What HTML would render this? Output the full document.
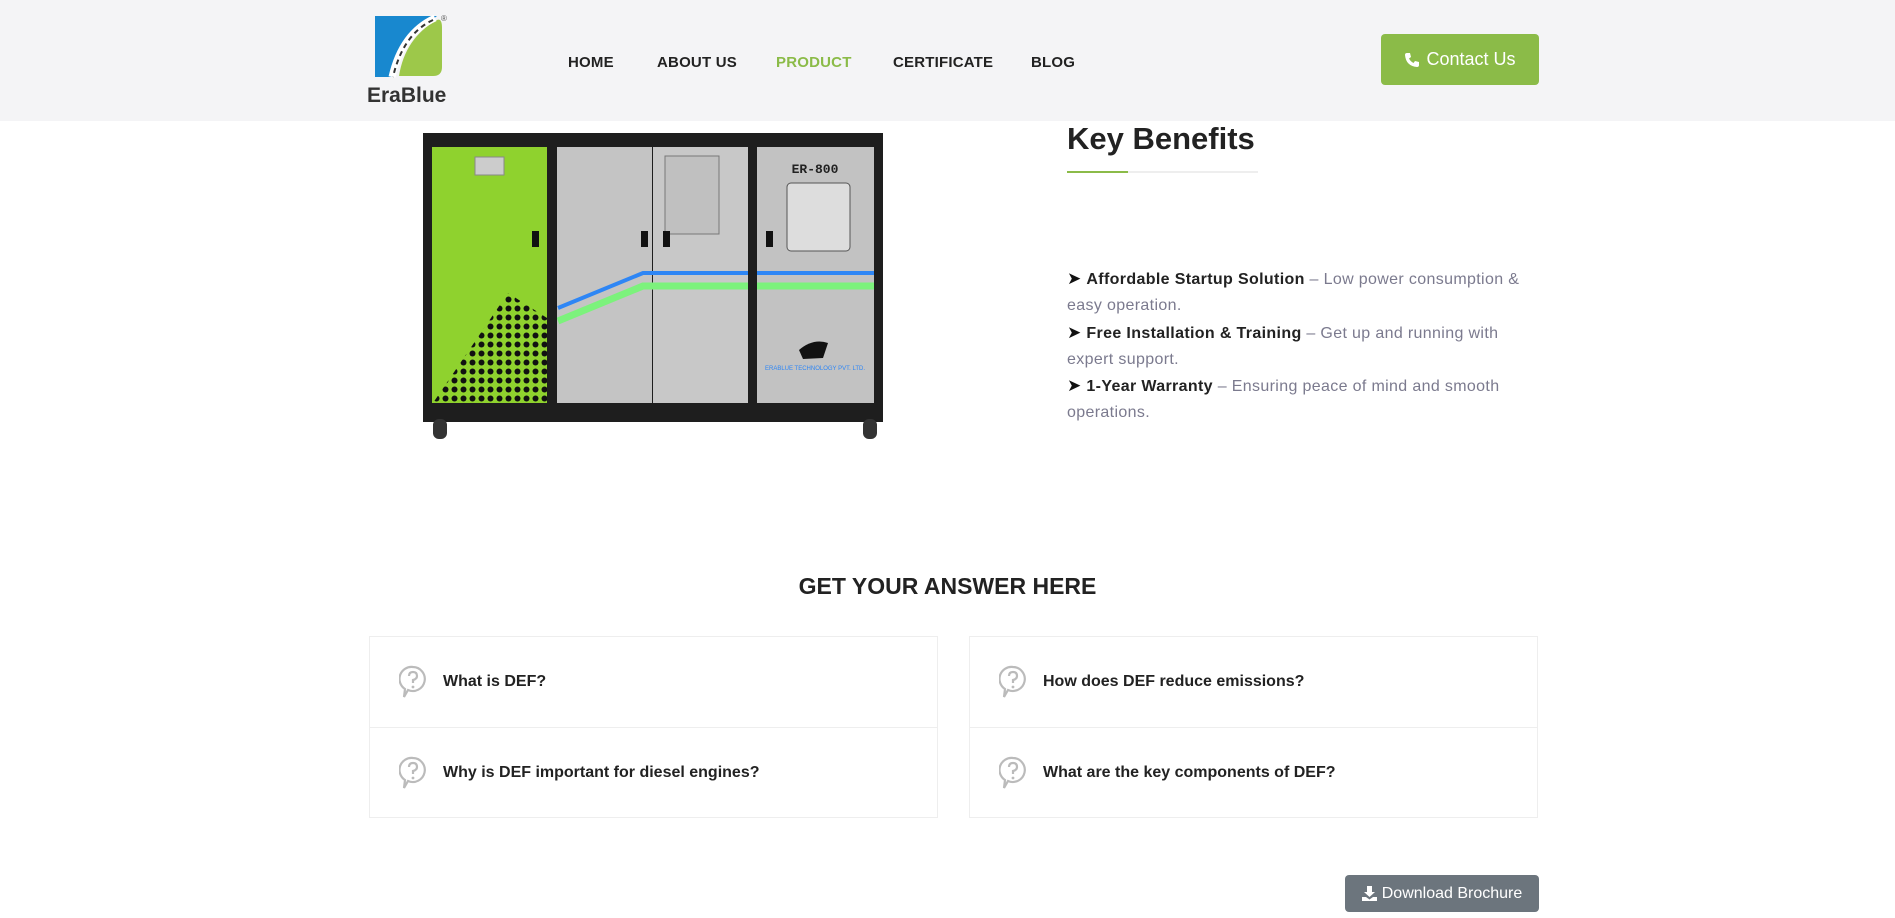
<!DOCTYPE html>
<html><head><meta charset="utf-8"><style>
*{margin:0;padding:0;box-sizing:border-box}
body{width:1895px;height:918px;overflow:hidden;background:#fff;font-family:"Liberation Sans",Arial,sans-serif;position:relative;color:#222}
.hdr{position:absolute;left:0;top:0;width:1895px;height:121px;background:#f4f4f6}
.nav{position:absolute;top:54px;font-size:15px;font-weight:700;color:#222;letter-spacing:.2px}
.abs{position:absolute}
.btn{position:absolute;left:1381px;top:34px;width:158px;height:51px;background:#8bbb48;border-radius:4px;color:#fff;font-size:18px;display:flex;align-items:center;justify-content:center;gap:6px}
h2{position:absolute;left:1067px;top:121px;font-size:31px;font-weight:700;color:#222}
.ul{position:absolute;left:1067px;top:171px;width:191px;height:2px;background:#eee}
.ul i{position:absolute;left:0;top:0;width:61px;height:2px;background:#8bbb48}
.list{position:absolute;left:1067px;top:266px;width:460px;font-size:16px;line-height:26.3px;color:#7b7a8e;letter-spacing:.35px}
.list b{color:#222}
.list s{text-decoration:none;color:#111;font-size:17px}
.faqh{position:absolute;left:0;width:1895px;top:573px;text-align:center;font-size:23px;font-weight:700;color:#222}
.box{position:absolute;top:636px;width:569px;height:182px;border:1px solid #eee}
.row{height:90px;display:flex;align-items:center;font-size:16px;font-weight:700;color:#222}
.row+.row{border-top:1px solid #eee}
.row svg{margin-left:29px;margin-right:16px}
.dl{position:absolute;left:1345px;top:875px;width:194px;height:37px;background:#6c757d;border-radius:4px;color:#fff;font-size:16px;display:flex;align-items:center;justify-content:center;gap:5px}
</style></head><body>
<div class="hdr"></div>
<svg class="abs" style="left:367px;top:13px" width="85" height="70" viewBox="0 0 85 70">
<path d="M8 3 H70 L66 6 Q40 20 30 58 L28 64 H8 Z" fill="#1888cf"/>
<path d="M70 7 Q75 5 75 15 V54 Q75 63 66 63 H32 Q38 25 70 7Z" fill="#9dc84a"/>
<path d="M68 5 Q35 20 25 64" stroke="#fff" stroke-width="7" fill="none"/>
<path d="M66 7 Q36 21 26 64" stroke="#333" stroke-width="2" stroke-dasharray="5 4" fill="none"/>
<text x="74" y="8" font-size="8" fill="#555" font-family="Liberation Sans">®</text>
</svg>
<div class="abs" style="left:367px;top:84px;font-size:21px;color:#333;font-weight:700">EraBlue</div>
<div class="nav" style="left:568px">HOME</div>
<div class="nav" style="left:657px">ABOUT US</div>
<div class="nav" style="left:776px;color:#8bbb48">PRODUCT</div>
<div class="nav" style="left:893px">CERTIFICATE</div>
<div class="nav" style="left:1031px">BLOG</div>
<div class="btn"><svg width="16" height="16" viewBox="0 0 16 16"><path d="M3 1 L6 1 L7 5 L5 6.5 Q6.5 9.5 9.5 11 L11 9 L15 10 V13 Q15 15 13 15 Q2 14 1 3 Q1 1 3 1Z" fill="#fff"/></svg>Contact Us</div>

<svg class="abs" style="left:423px;top:133px" width="462" height="310" viewBox="0 0 462 310">
<defs><pattern id="dp" width="9" height="9" patternUnits="userSpaceOnUse"><circle cx="4.5" cy="4.5" r="3" fill="#111"/></pattern>
<clipPath id="tri"><polygon points="85,160 124,185 124,270 10,270"/></clipPath></defs>
<rect x="0" y="0" width="460" height="289" fill="#1e1e1e"/>
<rect x="9" y="14" width="115" height="256" fill="#8fd22e"/>
<rect x="9" y="14" width="115" height="256" fill="url(#dp)" clip-path="url(#tri)"/>
<rect x="52" y="24" width="29" height="18" fill="#ccc" stroke="#888"/>
<rect x="109" y="98" width="7" height="16" fill="#111"/>
<rect x="134" y="14" width="95" height="256" fill="#c4c4c4"/>
<rect x="230" y="14" width="95" height="256" fill="#c8c8c8"/>
<rect x="242" y="23" width="54" height="78" fill="#c0c0c0" stroke="#777"/>
<rect x="218" y="98" width="7" height="16" fill="#111"/>
<rect x="240" y="98" width="7" height="16" fill="#111"/>
<rect x="334" y="14" width="117" height="256" fill="#c2c2c2"/>
<rect x="343" y="98" width="7" height="16" fill="#111"/>
<text x="392" y="40" font-size="13" font-weight="700" font-family="Liberation Mono" fill="#222" text-anchor="middle">ER-800</text>
<rect x="364" y="50" width="63" height="68" rx="4" fill="#ddd" stroke="#555"/>
<path d="M135 175 L220 140 H451" stroke="#2e86f5" stroke-width="4" fill="none"/>
<path d="M135 188 L220 153 H451" stroke="#7cf27c" stroke-width="7" fill="none"/>
<rect x="325" y="130" width="9" height="40" fill="#1e1e1e"/>
<rect x="124" y="14" width="10" height="256" fill="#1e1e1e"/>
<path d="M376 217 Q390 205 405 210 L400 225 L380 226Z" fill="#111"/>
<text x="392" y="237" font-size="6" fill="#2e86f5" text-anchor="middle">ERABLUE TECHNOLOGY PVT. LTD.</text>
<rect x="10" y="286" width="14" height="20" rx="6" fill="#333"/>
<rect x="440" y="286" width="14" height="20" rx="6" fill="#333"/>
</svg>

<h2>Key Benefits</h2>
<div class="ul"><i></i></div>
<div class="list"><s>➤</s> <b>Affordable Startup Solution</b> – Low power consumption &amp; easy operation.<br><s>➤</s> <b>Free Installation &amp; Training</b> – Get up and running with expert support.<br><s>➤</s> <b>1-Year Warranty</b> – Ensuring peace of mind and smooth operations.</div>

<div class="faqh">GET YOUR ANSWER HERE</div>
<svg width="0" height="0" style="position:absolute"><defs><symbol id="q" viewBox="0 0 28 34"><path d="M14 2 A12 12 0 1 1 9 25 L5 32 L6 24 A12 12 0 0 1 14 2Z" fill="none" stroke="#bbb" stroke-width="2.2"/><path d="M10 11 Q10 7 14 7 Q18 7 18 11 Q18 14 14 15 V18" fill="none" stroke="#bbb" stroke-width="2.2"/><circle cx="14" cy="22" r="1.4" fill="#bbb"/></symbol></defs></svg>
<div class="box" style="left:369px">
<div class="row"><svg width="28" height="34"><use href="#q"/></svg>What is DEF?</div>
<div class="row"><svg width="28" height="34"><use href="#q"/></svg>Why is DEF important for diesel engines?</div>
</div>
<div class="box" style="left:969px">
<div class="row"><svg width="28" height="34"><use href="#q"/></svg>How does DEF reduce emissions?</div>
<div class="row"><svg width="28" height="34"><use href="#q"/></svg>What are the key components of DEF?</div>
</div>
<div class="dl"><svg width="15" height="15" viewBox="0 0 15 15"><path d="M5 0 H10 V6 H13 L7.5 11 L2 6 H5Z M0 11 H4 L7.5 13.5 L11 11 H15 V15 H0Z" fill="#fff"/></svg>Download Brochure</div>
</body></html>
